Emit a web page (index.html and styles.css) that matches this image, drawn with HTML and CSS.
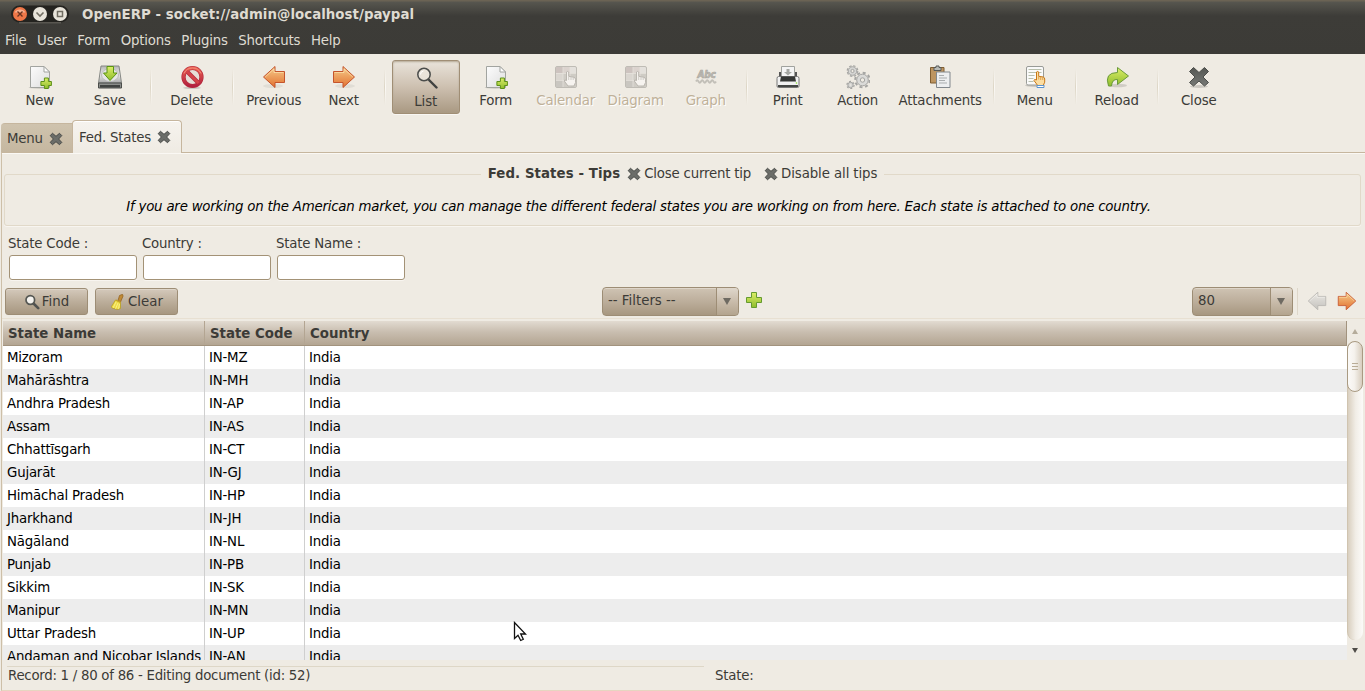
FILE: index.html
```html
<!DOCTYPE html>
<html lang="en">
<head>
<meta charset="utf-8">
<title>OpenERP</title>
<link rel="stylesheet" href="styles.css">
</head>
<body>
<svg class="defs" width="0" height="0" aria-hidden="true">
  <defs>
    <linearGradient id="g-page" x2="1" y2="1"><stop offset="0" stop-color="#fcfcfc"/><stop offset="1" stop-color="#dedede"/></linearGradient>
    <linearGradient id="g-green" x2="0" y2="1"><stop offset="0" stop-color="#dcee68"/><stop offset="1" stop-color="#8fbd2c"/></linearGradient>
    <linearGradient id="g-orange" x2="0" y2="1"><stop offset="0" stop-color="#f6cd8c"/><stop offset="1" stop-color="#e2702f"/></linearGradient>
    <linearGradient id="g-red" x2="0" y2="1"><stop offset="0" stop-color="#e8604f"/><stop offset="1" stop-color="#b3203f"/></linearGradient>
    <linearGradient id="g-disk" x2="0" y2="1"><stop offset="0" stop-color="#b4b4b4"/><stop offset=".5" stop-color="#ececec"/><stop offset="1" stop-color="#a8a8a8"/></linearGradient>
    <linearGradient id="g-cross" x2="0" y2="1"><stop offset="0" stop-color="#555753"/><stop offset="1" stop-color="#777976"/></linearGradient>
  </defs>
  <symbol id="i-new" viewBox="0 0 24 24">
    <ellipse cx="11.500" cy="22.500" rx="11" ry="1.200" fill="#000" opacity=".15"/>
    <path d="M2.500 1.500h13.500l5.500 5.500v15.500h-19z" fill="url(#g-page)" stroke="#a2a4a0"/>
    <path d="M16 1.500v5.500h5.500z" fill="#fff" stroke="#a2a4a0"/>
    <path d="M16.500 13.500h4v3.500h3v4h-3v3h-4v-3h-3.500v-4h3.500z" transform="translate(-.1 -.5)" fill="url(#g-green)" stroke="#5c9018"/>
  </symbol>
  <symbol id="i-save" viewBox="0 0 24 24">
    <path d="M3 1h18l2.500 17H.500z" fill="url(#g-disk)" stroke="#858783"/>
    <ellipse cx="12" cy="10" rx="8.500" ry="6.500" fill="#e6e6e6" stroke="#bababa"/>
    <path d="M.5 18h23v5H.500z" fill="#8b8d8a" stroke="#4b4d4a"/>
    <path d="M2 20h20v2.500H2z" fill="#404240"/>
    <path d="M9 1.500h6.500v6.500h3.500l-7 7.500-6.500-7.500h3.500z" fill="url(#g-green)" stroke="#5a9413"/>
  </symbol>
  <symbol id="i-delete" viewBox="0 0 24 24">
    <ellipse cx="12" cy="22.800" rx="9" ry="1.200" fill="#000" opacity=".15"/>
    <circle cx="12.500" cy="12" r="9" fill="#e6ded6" stroke="#b52a3c" stroke-width="4.200"/>
    <path d="M6.500 6l12 12" stroke="#b52a3c" stroke-width="4"/>
    <circle cx="12.500" cy="12" r="9" fill="none" stroke="url(#g-red)" stroke-width="3"/>
    <path d="M6.500 6l12 12" stroke="#d44449" stroke-width="2.600"/>
    <path d="M4 8.500A9.300 9.300 0 0 1 21 8.500" fill="none" stroke="#f9998a" stroke-width=".8"/>
  </symbol>
  <symbol id="i-arrow" viewBox="0 0 24 24">
    <path d="M1.500 6.500h9.500v-5l11.500 10.500-11.500 10.500v-5h-9.500z" fill="url(#g-orange)" stroke="#c5542c"/>
    <path d="M2.500 7.500h9.500v-3.700l8.800 8.200" fill="none" stroke="#fff0c0" stroke-width=".8" opacity=".7"/>
  </symbol>
  <symbol id="i-next" viewBox="0 0 24 24">
    <ellipse cx="13" cy="21" rx="10" ry="2" fill="#000" opacity=".06"/>
    <use href="#i-arrow" width="24" height="24"/>
  </symbol>
  <symbol id="i-list" viewBox="0 0 24 24">
    <path d="M14.500 13.500l8 8" stroke="#3f4140" stroke-width="2.400" stroke-linecap="round"/>
    <circle cx="10" cy="8.500" r="6.200" fill="#ece7df" fill-opacity=".8" stroke="#4b4d4b" stroke-width="1.500"/>
    <path d="M6.500 8.500a3.500 3.500 0 0 1 3-3.500" stroke="#fff" fill="none"/>
  </symbol>
  <symbol id="i-find" viewBox="0 0 16 16">
    <path d="M9 9l5.200 5.200" stroke="#505250" stroke-width="2.600" stroke-linecap="round"/>
    <circle cx="6.300" cy="6" r="4.300" fill="#f4f2ee" stroke="#555753" stroke-width="1.700"/>
  </symbol>
  <symbol id="i-clear" viewBox="0 0 16 16">
    <path d="M8 6.500l1.500-5 3-1.200.6 1.700-2.600 6z" fill="#c08a35" stroke="#8f5f1c" stroke-width=".7"/>
    <path d="M5.500 6l5 2.300v6.200l-3 1-5.500-1.500-.5-1.500z" fill="#eedb45" stroke="#b39a1a" stroke-width=".7"/>
    <path d="M6 8l-3 6M8 9l-2.500 6M9.500 10l-1 5" stroke="#fff8a0" stroke-width=".7"/>
    <path d="M6 6l4.500 2.300" stroke="#c6a32a" stroke-width="1.300"/>
  </symbol>
  <symbol id="i-calendar" viewBox="0 0 24 24">
    <rect x="1.500" y="1.500" width="21" height="21" rx="1.500" fill="#e4e1dc" stroke="#bfbcb5"/>
    <path d="M2 2h7v6H2z" fill="#cdc3bf"/><path d="M9 2h7v6H9z" fill="#dbd3ce"/>
    <path d="M2 15h7v7H2z" fill="#c9c6c0"/><path d="M2 8h7v7H2z" fill="#dad6d0"/><path d="M9 8h13v14H9z" fill="#cfccc5"/>
    <path d="M9 2v20M16 2v20M2 8.500h20M2 15.500h20" stroke="#e6e2dc" stroke-width=".8"/>
    <path d="M12.500 7q1.200-1.200 2.200 0v4.300l5.300 1q1.500.5 1.500 2v3.200l-1.500 3.500h-6l-3.700-5q0-1.800 2.200-.5z" fill="#f6f3ef" stroke="#bab6af"/>
    <path d="M14.700 11.500v3.500M17 12v3M19.200 12.500v2.500" stroke="#c4c0ba" stroke-width=".8"/>
  </symbol>
  <symbol id="i-print" viewBox="0 0 24 24">
    <path d="M3 7v5h3V7zM21 7v5h-3V7z" fill="#555"/>
    <path d="M5.500 1.500h13v11h-13z" fill="#f4f4f4" stroke="#a0a29e"/>
    <path d="M10.500 4h3v3h2.500l-4 3.500-4-3.500h2.500z" fill="#a5a7a3"/>
    <path d="M2.500 11.500h19q1.500 0 1.500 2v7.500q0 1.500-1.500 1.500h-19Q1 22.500 1 21v-7.500q0-2 1.500-2z" fill="#f1f1f1" stroke="#777"/>
    <path d="M5 11.500h14l1 5H4z" fill="#353735"/><path d="M2 20h20v2H2z" fill="#444644"/>
    <circle cx="20.500" cy="18" r=".8" fill="#8ae234"/>
  </symbol>
  <symbol id="i-action" viewBox="0 0 24 24">
    <g fill="none" stroke="#a5a5a3" stroke-width="1.200"><circle cx="6.500" cy="6" r="5.300" stroke-dasharray="2.500 1.660"/><circle cx="16.500" cy="15" r="7.300" stroke-width="2" stroke-dasharray="3 2.730"/><circle cx="4.500" cy="20" r="3.600" stroke-dasharray="2 1.770"/></g>
    <circle cx="6.500" cy="6" r="4.300" fill="#d5d5d3" stroke="#a5a5a3"/><circle cx="6.500" cy="6" r="1.600" fill="#efebe3" stroke="#a5a5a3"/>
    <circle cx="16.500" cy="15" r="5.800" fill="#dadad8" stroke="#a5a5a3"/><circle cx="16.500" cy="15" r="2.200" fill="#efebe3" stroke="#a5a5a3"/>
    <circle cx="4.500" cy="20" r="2.700" fill="#d5d5d3" stroke="#a5a5a3"/><circle cx="4.500" cy="20" r=".8" fill="#efebe3"/>
  </symbol>
  <symbol id="i-attach" viewBox="0 0 24 24">
    <path d="M1.500 2.500h13.500v15.500h-13.500z" fill="#bd9561" stroke="#7f5d32"/>
    <path d="M5 2.500h2V1h3v1.500h2v3H5z" fill="#b8bab6" stroke="#575957"/>
    <path d="M7.500 7h13.500v15.500h-13.500z" fill="#eceef0" stroke="#81888e"/>
    <path d="M10 10.500h5M10 13h8M10 15.500h6M10 18h8" stroke="#a9adaf"/>
  </symbol>
  <symbol id="i-menu" viewBox="0 0 24 24">
    <ellipse cx="12" cy="20.500" rx="10" ry="1.500" fill="#000" opacity=".15"/>
    <rect x="3.500" y="1.500" width="17" height="18.500" rx="1.500" fill="#fafafa" stroke="#999b97"/>
    <path d="M5.500 4.500h13M5.500 7.500h13M5.500 10.500h6M5.500 13.500h5M5.500 16.500h5" stroke="#b9c0ad"/>
    <path d="M13.500 7q1.200-1.200 2.200 0v4.300l4.500.7q1.500.5 1.500 2v3.200l-1.500 3.300h-5.500l-3.700-5q0-1.800 2.500-.5z" fill="#fbdda1" stroke="#c87716"/>
    <path d="M15.700 11.500v3M17.700 12v3M19.700 12.500v2.500" stroke="#d38a2d" stroke-width=".7"/>
    <path d="M14 20.500h7v2h-7z" fill="#fff" stroke="#5b93ce"/>
  </symbol>
  <symbol id="i-reload" viewBox="0 0 24 24">
    <ellipse cx="13" cy="20.500" rx="9" ry="1.800" fill="#000" opacity=".13"/>
    <path d="M12.500 2.500l11 8.500-11 8.500v-5q-5.500-.5-6 6.500H3.500Q-1 7.500 12.500 7.500z" fill="url(#g-green)" stroke="#6b9a3a"/>
  </symbol>
  <symbol id="i-close" viewBox="0 0 24 24">
    <ellipse cx="12" cy="21.500" rx="9" ry="1.500" fill="#000" opacity=".15"/>
    <path d="M6.500 2.500l5.500 5 5.500-5 4 4-5.500 5.500 5.500 5.500-4 3.500-5.500-5-5.500 5-4-3.500 5.500-5.500-5.500-5.500z" fill="url(#g-cross)" stroke="#4b4d4a" stroke-linejoin="round"/>
  </symbol>
  <symbol id="i-x" viewBox="0 0 14 14">
    <path d="M3.500 1.300l3.500 3 3.500-3 2.300 2.300-3.200 3.400 3.200 3.400-2.300 2.300-3.500-3-3.500 3-2.300-2.300 3.200-3.400-3.200-3.400z" fill="#6b6d69" stroke="#484a47" stroke-linejoin="round"/>
  </symbol>
  <symbol id="i-plus" viewBox="0 0 16 16">
    <path d="M5.500.5h5v5h5v5h-5v5h-5v-5h-5v-5h5z" fill="url(#g-green)" stroke="#659a30"/>
  </symbol>
</svg>

<header class="window-head">
  <div class="titlebar">
    <span class="win-buttons">
      <svg width="60" height="20" viewBox="0 0 60 20">
        <rect x="1" y="1.500" width="58" height="17" rx="8.500" fill="#24231f"/><path d="M9 18.800h42" stroke="#6b6961" stroke-width="1"/>
        <circle cx="10" cy="10" r="7" fill="#ef7748"/><path d="M4.500 8.500a6 5 0 0 1 11 0" fill="#f8b08f"/><path d="M7.500 7.500l5 5M12.500 7.500l-5 5" stroke="#6a3420" stroke-width="1.400"/>
        <circle cx="30" cy="10" r="7" fill="#e8e4da"/><path d="M26.500 8.500l3.500 3.500 3.500-3.500" fill="none" stroke="#716d62" stroke-width="1.600"/>
        <circle cx="50" cy="10" r="7" fill="#e8e4da"/><path d="M47.500 7.500h5v5h-5z" fill="none" stroke="#716d62" stroke-width="1.500"/>
      </svg>
    </span>
    <span class="win-title">OpenERP - socket://admin@localhost/paypal</span>
  </div>
  <nav class="menubar"><span>File</span><span>User</span><span>Form</span><span>Options</span><span>Plugins</span><span>Shortcuts</span><span>Help</span></nav>
</header>

<div class="toolbar">
  <div class="tool"><svg><use href="#i-new"/></svg><span>New</span></div>
  <div class="tool"><svg><use href="#i-save"/></svg><span>Save</span></div>
  <i class="sep"></i>
  <div class="tool"><svg><use href="#i-delete"/></svg><span>Delete</span></div>
  <i class="sep"></i>
  <div class="tool"><svg class="flip"><use href="#i-next"/></svg><span>Previous</span></div>
  <div class="tool"><svg><use href="#i-next"/></svg><span>Next</span></div>
  <i class="sep"></i>
  <div class="tool active"><svg><use href="#i-list"/></svg><span>List</span></div>
  <div class="tool"><svg><use href="#i-new"/></svg><span>Form</span></div>
  <div class="tool off"><svg><use href="#i-calendar"/></svg><span>Calendar</span></div>
  <div class="tool off"><svg><use href="#i-calendar"/></svg><span>Diagram</span></div>
  <div class="tool off"><svg viewBox="0 0 24 24"><text class="abc" x="12.500" y="12.500" text-anchor="middle">Abc</text><path d="M2 16.500q1.200-2.500 2.500 0t2.500 0 2.500 0 2.500 0 2.500 0 2.500 0 2.500 0 2.500 0" fill="none" stroke="#c2bfb8" stroke-width="1.800"/></svg><span>Graph</span></div>
  <i class="sep"></i>
  <div class="tool"><svg><use href="#i-print"/></svg><span>Print</span></div>
  <div class="tool"><svg><use href="#i-action"/></svg><span>Action</span></div>
  <div class="tool wide"><svg><use href="#i-attach"/></svg><span>Attachments</span></div>
  <i class="sep"></i>
  <div class="tool"><svg><use href="#i-menu"/></svg><span>Menu</span></div>
  <i class="sep"></i>
  <div class="tool"><svg><use href="#i-reload"/></svg><span>Reload</span></div>
  <i class="sep"></i>
  <div class="tool"><svg><use href="#i-close"/></svg><span>Close</span></div>
</div>

<div class="tabs">
  <div class="tab">Menu<svg><use href="#i-x"/></svg></div>
  <div class="tab current">Fed. States<svg><use href="#i-x"/></svg></div>
</div>

<main class="page">
  <fieldset class="tips">
    <legend><b>Fed. States - Tips</b><span class="tip-link"><svg><use href="#i-x"/></svg>Close current tip</span><span class="tip-link second"><svg><use href="#i-x"/></svg>Disable all tips</span></legend>
    <p>If you are working on the American market, you can manage the different federal states you are working on from here. Each state is attached to one country.</p>
  </fieldset>

  <form class="search">
    <label>State Code :<input type="text"></label>
    <label>Country :<input type="text"></label>
    <label>State Name :<input type="text"></label>
  </form>

  <div class="actions">
    <button type="button" class="btn"><svg><use href="#i-find"/></svg>Find</button>
    <button type="button" class="btn"><svg><use href="#i-clear"/></svg>Clear</button>
    <div class="combo filters"><span>-- Filters --</span><i><b class="down"></b></i></div>
    <svg class="plus"><use href="#i-plus"/></svg>
    <div class="combo limit"><span>80</span><i><b class="down"></b></i></div>
    <i class="pager-sep"></i>
    <svg class="pager faded flip"><use href="#i-arrow"/></svg>
    <svg class="pager"><use href="#i-arrow"/></svg>
  </div>

  <div class="list">
    <div class="grid">
      <div class="row head"><span>State Name</span><span>State Code</span><span>Country</span></div>
      <div class="row"><span>Mizoram</span><span>IN-MZ</span><span>India</span></div>
      <div class="row"><span>Mahārāshtra</span><span>IN-MH</span><span>India</span></div>
      <div class="row"><span>Andhra Pradesh</span><span>IN-AP</span><span>India</span></div>
      <div class="row"><span>Assam</span><span>IN-AS</span><span>India</span></div>
      <div class="row"><span>Chhattīsgarh</span><span>IN-CT</span><span>India</span></div>
      <div class="row"><span>Gujarāt</span><span>IN-GJ</span><span>India</span></div>
      <div class="row"><span>Himāchal Pradesh</span><span>IN-HP</span><span>India</span></div>
      <div class="row"><span>Jharkhand</span><span>IN-JH</span><span>India</span></div>
      <div class="row"><span>Nāgāland</span><span>IN-NL</span><span>India</span></div>
      <div class="row"><span>Punjab</span><span>IN-PB</span><span>India</span></div>
      <div class="row"><span>Sikkim</span><span>IN-SK</span><span>India</span></div>
      <div class="row"><span>Manipur</span><span>IN-MN</span><span>India</span></div>
      <div class="row"><span>Uttar Pradesh</span><span>IN-UP</span><span>India</span></div>
      <div class="row"><span>Andaman and Nicobar Islands</span><span>IN-AN</span><span>India</span></div>
    </div>
    <div class="scroll">
      <div class="arrow"><b class="up"></b></div>
      <div class="track"><div class="thumb"><i></i><i></i><i></i></div></div>
      <div class="arrow end"><b class="down small"></b></div>
    </div>
  </div>

  <footer class="status"><span class="record">Record: 1 / 80 of 86 - Editing document (id: 52)</span><span class="state">State:</span></footer>
</main>

<svg class="cursor" width="14" height="22" viewBox="0 0 14 22"><path d="M1.500 1.500v16l3.500-3.300 2.700 5.300 2.600-1.200-2.600-5.300h4.800z" fill="#fff" stroke="#111" stroke-width="1.300"/></svg>
</body>
</html>
```

FILE: styles.css
```css
* { box-sizing: border-box; }
body {
  margin: 0;
  width: 1365px;
  height: 691px;
  overflow: hidden;
  display: flex;
  flex-direction: column;
  position: relative;
  background: #efebe3;
  color: #3c3b37;
  font: 13.333px/16px "DejaVu Sans", sans-serif;
  letter-spacing: -.2px;
  white-space: nowrap;
}
i { font-style: normal; }
svg { flex: none; }
.defs { position: absolute; }
.flip { transform: scaleX(-1); }

.window-head {
  height: 54px;
  color: #dfdbd2;
  background: linear-gradient(#6b6354 0, #6b6354 1px, #57564f 2px, #3d3c38 16px, #3c3b37 54px);
}
.titlebar { height: 28px; display: flex; align-items: center; padding: 0 0 0 10px; }
.win-buttons { height: 20px; }
.win-buttons svg { display: block; }
.win-title { font-weight: bold; margin-left: 12px; padding-top: 1px; letter-spacing: .05px; }
.menubar { display: flex; gap: 10.5px; padding: 5px 0 0 5px; letter-spacing: -.18px; }

.toolbar { height: 66px; display: flex; padding: 6px 0 0 5px; }
.tool {
  width: 70px;
  height: 54px;
  display: flex;
  flex-direction: column;
  align-items: center;
  padding-top: 5px;
  flex: none;
}
.tool svg { width: 24px; height: 24px; margin-bottom: 4px; }
.tool span { letter-spacing: -.15px; position: relative; left: -.3px; }
.tool.wide { width: 95px; }
.tool.active {
  width: 68px;
  margin: 0 1px;
  border: 1px solid #a08e75;
  border-radius: 3px;
  background: linear-gradient(#e9e3da, #cdc0b0 50%, #a99982);
  box-shadow: inset 0 1px 2px #b3a794, 0 1px 0 #f8f6f2;
}
.tool.off { color: #bfb199; text-shadow: 1px 1px 0 #fff; }
.abc { font: bold italic 10px "DejaVu Sans Condensed", "DejaVu Sans", sans-serif; fill: #bdbab3; stroke: #aaa79f; stroke-width: .6px; letter-spacing: -.2px; text-shadow: none; }
.sep {
  width: 12px;
  height: 36px;
  margin-top: 9px;
  flex: none;
  background: linear-gradient(#efebe300, #ddd6c6 50%, #efebe300) 5px 0 / 1px 100% no-repeat, linear-gradient(#fff0, #fbf9f5 50%, #fff0) 6px 0 / 1px 100% no-repeat;
}

.tabs { height: 32px; display: flex; align-items: flex-end; padding-left: 1px; flex: none; }
.tab {
  width: 72px;
  height: 29px;
  display: flex;
  align-items: center;
  padding: 2px 0 0 6px;
  border: 1px solid #c6b69e;
  border-width: 1px 0 0;
  border-radius: 4px 0 0 0;
  background: linear-gradient(#cfc3ae, #c5b7a0);
  flex: none;
}
.tab svg { width: 14px; height: 14px; margin-left: 6px; }
.tab.current {
  width: 110px;
  height: 33px;
  margin: 0 0 -1px -1px;
  padding: 1px 0 0 6px;
  border-width: 1px 1px 0;
  border-radius: 4px 4px 0 0;
  background: linear-gradient(#f6f3ee, #efebe3);
  box-shadow: inset 0 1px 0 #fff;
  z-index: 1;
}
.tab.current svg { margin-bottom: 1px; }

.page {
  height: 539px;
  margin-left: 1px;
  border-left: 1px solid #cdbfa8;
  border-top: 1px solid #c6b69e;
  border-bottom: 1px solid #e6d5c0;
  box-shadow: inset 0 1px 0 #faf8f4;
  display: flex;
  flex-direction: column;
}
.tips {
  width: 1357px;
  height: 61px;
  margin: 12px 0 0 2px;
  padding: 0;
  border: 1px solid #e1d9c9;
  border-radius: 3px;
  box-shadow: 0 1px 0 #f8f5f0;
  min-inline-size: 0;
}
.tips legend { display: flex; margin: 0 auto; padding: 0 7px; height: 18px; align-items: center; }
.tips legend b { letter-spacing: .08px; }
.tips legend svg { width: 14px; height: 14px; margin: 0 3px 1px 0; }
.tip-link { display: flex; align-items: center; margin-left: 7px; }
.tip-link.second { margin-left: 13px; letter-spacing: -.1px; }
.tips p { margin: 16px 0 0; padding-right: 88px; text-align: center; font-style: italic; color: #000; }

.search { display: flex; gap: 6px; padding: 10px 0 0 6px; height: 55px; margin: 0; }
.search label { display: flex; flex-direction: column; width: 128px; }
.search input {
  width: 128px;
  height: 25px;
  margin: 3px 0 0 1px;
  border: 1px solid #a39276;
  border-radius: 3px;
  background: #fff;
  box-shadow: 0 1px 0 #f8f5f0;
}

.actions { height: 38px; display: flex; padding: 6px 0 0 3px; border-bottom: 1px solid #e8e0d2; }
.actions > * { flex: none; }
.btn {
  width: 83px;
  height: 27px;
  margin: 1px 7px 0 0;
  padding: 0;
  display: flex;
  justify-content: center;
  align-items: center;
  gap: 2px;
  font: inherit;
  color: inherit;
  border: 1px solid #9d8d75;
  border-radius: 3px;
  background: linear-gradient(#d4c9bb, #bcae9b 50%, #a79780);
  box-shadow: inset 0 1px 0 #ded5c9;
}
.btn svg { width: 16px; height: 16px; }
.combo {
  height: 29px;
  display: flex;
  align-items: stretch;
  border: 1px solid #9d8d75;
  border-radius: 4px;
  background: linear-gradient(#cfc3b3, #bcae9b 50%, #a79780);
  box-shadow: inset 0 1px 0 #ded5c9;
  overflow: hidden;
}
.combo span { flex: 1; padding: 5px 0 0 5px; letter-spacing: 0; }
.combo i {
  width: 22px;
  display: flex;
  align-items: center;
  justify-content: center;
  padding-right: 2px;
  border-left: 1px solid #9d8d75;
  background: linear-gradient(#dfd7cc, #c9bcab 50%, #b3a48e);
}
.filters { width: 137px; margin-left: 417px; }
.plus { width: 16px; height: 16px; margin: 5px 0 0 7px; }
.limit { width: 101px; margin-left: 430px; }
.down { border: 4px solid transparent; border-top: 7px solid #6e6a62; border-bottom: 0; }
.up { border: 3px solid transparent; border-bottom: 5px solid #b5ac9b; border-top: 0; }
.down.small { border-width: 5px 3px 0; border-top-color: #4f4d49; }
.pager-sep { width: 1px; height: 27px; margin: 1px 9px 0 4px; background: #ded7ca; }
.pager { width: 20px; height: 20px; margin: 4px 10px 0 0; }
.pager.faded { filter: grayscale(1) brightness(1.1); opacity: .45; }

.list { height: 341px; display: flex; padding: 2px 0 0 1px; flex: none; }
.grid { width: 1344px; height: 339px; overflow: hidden; background: #fff; color: #000; }
.row { height: 23px; display: grid; grid-template-columns: 202px 100px 1fr; }
.row span { padding: 4px 0 0 4px; border-right: 1px solid #cfcfcf; }
.row span:last-child { border: 0; }
.row:nth-child(odd) { background: #ededed; }
.row.head {
  height: 25px;
  color: #3c3b37;
  font-weight: bold;
  letter-spacing: 0;
  border-bottom: 1px solid #a2937e;
  border-right: 1px solid #a2937e;
  background: linear-gradient(#e2dbd1, #c9beb0 45%, #b3a592);
}
.row.head span { padding: 5px 0 0 5px; border-color: #b3a592; }
.scroll { width: 16px; height: 339px; display: flex; flex-direction: column; }
.arrow { height: 20px; display: flex; align-items: center; justify-content: center; }
.track {
  height: 299px;
  border: 1px solid #d0c4b0;
  border-width: 0 0 0 1px;
  border-radius: 8px;
  background: linear-gradient(90deg, #d9cfbf, #f1ede6 50%, #fcfbf9);
}
.thumb {
  width: 16px;
  height: 51px;
  margin-left: -1px;
  border: 1px solid #a99a82;
  border-radius: 8px;
  background: linear-gradient(90deg, #fbfaf8, #f5f2ed 45%, #d8cebf);
  display: flex;
  flex-direction: column;
  align-items: center;
  justify-content: center;
  gap: 2px;
}
.thumb i { width: 6px; height: 1px; background: #b9ac96; }

.status { display: flex; padding: 6px 0 0 5px; flex: 1; }
.record { width: 697px; padding: 1px 0 0 1px; height: 18px; border-top: 1px solid #ded7c7; letter-spacing: -.27px; }
.state { margin: 2px 0 0 11px; }

.cursor { position: absolute; left: 513px; top: 621px; }
```
